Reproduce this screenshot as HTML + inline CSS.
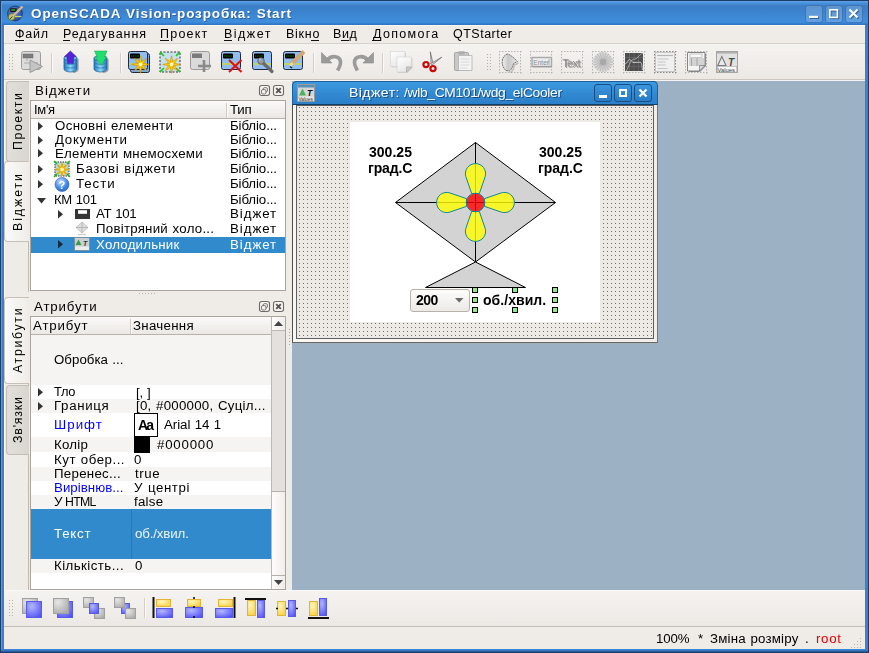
<!DOCTYPE html><html><head><meta charset="utf-8"><title>OpenSCADA</title><style>
*{margin:0;padding:0;box-sizing:border-box}
html,body{width:869px;height:653px;overflow:hidden;background:#fff;font-family:"Liberation Sans", sans-serif}
.t{position:absolute;white-space:nowrap;line-height:1;font-family:"Liberation Sans", sans-serif;word-spacing:0.6px;will-change:transform}
.a{position:absolute}
svg{position:absolute;overflow:visible}
</style></head><body>
<div class="a" style="left:0px;top:0px;width:869px;height:653px;background:#3a7fcf"></div>
<div class="a" style="left:0px;top:0px;width:869px;height:25px;background:linear-gradient(#1c3d68 0px,#1c3d68 1px,#62a2e8 1px,#4a92dc 3px,#3b7ec6 6px,#3c84d0 13px,#3f8edc 22px,#2f7cca 24px,#2a74c0 25px)"></div>
<div class="a" style="left:1px;top:25px;width:3px;height:624px;background:#3b80d0"></div>
<div class="a" style="left:865px;top:25px;width:3px;height:624px;background:#3b80d0"></div>
<div class="a" style="left:1px;top:1px;width:1px;height:651px;background:#5b9ae0"></div>
<div class="a" style="left:1px;top:649px;width:867px;height:3px;background:linear-gradient(#3d8ade,#3a80d2 1px,#2f68ac 2px,#23508a 3px)"></div>
<div class="a" style="left:0px;top:0px;width:869px;height:1px;background:#1c3d68"></div>
<div class="a" style="left:0px;top:0px;width:1px;height:653px;background:#1c3d68"></div>
<div class="a" style="left:868px;top:0px;width:1px;height:653px;background:#1c3d68"></div>
<div class="a" style="left:0px;top:652px;width:869px;height:1px;background:#1c3d68"></div>
<div class="a" style="left:4px;top:25px;width:861px;height:624px;background:#efebe7"></div>
<div class="a" style="left:4px;top:25px;width:861px;height:1px;background:#fdf6ec"></div>
<div class="a" style="left:4px;top:25px;width:1px;height:624px;background:#fdf6ec"></div>
<svg style="left:7px;top:5px;" width="16" height="16" viewBox="0 0 16 16">
<defs><radialGradient id="lg" cx="0.4" cy="0.35" r="0.8"><stop offset="0" stop-color="#5a8ae0"/><stop offset="1" stop-color="#1f3f9a"/></radialGradient></defs>
<circle cx="8" cy="8.5" r="7.4" fill="url(#lg)" stroke="#17306a" stroke-width="0.8"/>
<rect x="3.2" y="3.2" width="6.5" height="3.8" fill="#0a0a0a" stroke="#3a3a3a" stroke-width="0.5"/>
<rect x="4.2" y="4.3" width="4" height="1.4" fill="#2cc040"/>
<circle cx="4.6" cy="12" r="3.4" fill="#b5c860" stroke="#3a4020" stroke-width="0.6"/>
<path d="M3 14 L7 10" stroke="#222" stroke-width="0.8"/>
<path d="M15.5 1.5 L5.5 11.5" stroke="#d8b888" stroke-width="2.4"/>
<path d="M8 11.5 h6.5" stroke="#c8d860" stroke-width="1.3"/>
</svg>
<div class="t" style="left:30.90px;top:6.57px;font-size:13.5px;letter-spacing:0.877px;color:#fff;font-weight:bold;text-shadow:1px 1px 0 rgba(20,50,100,0.45)">OpenSCADA Vision-розробка: Start</div>
<div class="a" style="left:805px;top:5px;width:18px;height:18px;border-radius:3px;background:rgba(255,255,255,0.18);border:1px solid rgba(30,80,150,0.5)"></div>
<div class="a" style="left:825px;top:5px;width:18px;height:18px;border-radius:3px;background:rgba(255,255,255,0.18);border:1px solid rgba(30,80,150,0.5)"></div>
<div class="a" style="left:845px;top:5px;width:18px;height:18px;border-radius:3px;background:rgba(255,255,255,0.18);border:1px solid rgba(30,80,150,0.5)"></div>
<svg style="left:0px;top:0px;filter:drop-shadow(1px 1px 0 rgba(20,50,100,0.55))" width="869" height="30" viewBox="0 0 869 30"><rect x="809" y="15.8" width="9" height="2.2" fill="#fff"/><rect x="829.8" y="9.8" width="7.6" height="7.6" fill="none" stroke="#fff" stroke-width="1.6"/><path d="M849.5 9.5 L857.5 17.5 M857.5 9.5 L849.5 17.5" stroke="#fff" stroke-width="2"/></svg>
<div class="a" style="left:4px;top:43px;width:861px;height:1px;background:#d6d1cb"></div>
<div class="t" style="left:14.70px;top:28.42px;font-size:12.5px;letter-spacing:0.767px;color:#000;font-weight:normal;">Файл</div>
<div class="t" style="left:62.60px;top:28.42px;font-size:12.5px;letter-spacing:0.950px;color:#000;font-weight:normal;">Редагування</div>
<div class="t" style="left:160.20px;top:28.42px;font-size:12.5px;letter-spacing:1.220px;color:#000;font-weight:normal;">Проект</div>
<div class="t" style="left:223.60px;top:28.42px;font-size:12.5px;letter-spacing:1.480px;color:#000;font-weight:normal;">Віджет</div>
<div class="t" style="left:285.70px;top:28.42px;font-size:12.5px;letter-spacing:0.725px;color:#000;font-weight:normal;">Вікно</div>
<div class="t" style="left:333.20px;top:28.42px;font-size:12.5px;letter-spacing:0.600px;color:#000;font-weight:normal;">Вид</div>
<div class="t" style="left:372.50px;top:28.42px;font-size:12.5px;letter-spacing:1.314px;color:#000;font-weight:normal;">Допомога</div>
<div class="t" style="left:452.90px;top:28.42px;font-size:12.5px;letter-spacing:0.500px;color:#000;font-weight:normal;">QTStarter</div>
<div class="a" style="left:15px;top:40px;width:9px;height:1px;background:#111"></div>
<div class="a" style="left:63px;top:40px;width:7px;height:1px;background:#111"></div>
<div class="a" style="left:160px;top:40px;width:9px;height:1px;background:#111"></div>
<div class="a" style="left:224px;top:40px;width:8px;height:1px;background:#111"></div>
<div class="a" style="left:311px;top:40px;width:8px;height:1px;background:#111"></div>
<div class="a" style="left:341px;top:40px;width:8px;height:1px;background:#111"></div>
<div class="a" style="left:372px;top:40px;width:9px;height:1px;background:#111"></div>
<div class="a" style="left:4px;top:44px;width:861px;height:35px;background:linear-gradient(#f5f3f0,#ece9e5)"></div>
<div class="a" style="left:4px;top:79px;width:861px;height:1px;background:#cdc7c0"></div>
<div class="a" style="left:4px;top:80px;width:861px;height:1px;background:#f7f5f2"></div>
<svg style="left:9px;top:54px;" width="4" height="17" viewBox="0 0 4 17"><rect x="0" y="0" width="1" height="1" fill="#b4aea6"/><rect x="3" y="0" width="1" height="1" fill="#b4aea6"/><rect x="0" y="3" width="1" height="1" fill="#b4aea6"/><rect x="3" y="3" width="1" height="1" fill="#b4aea6"/><rect x="0" y="6" width="1" height="1" fill="#b4aea6"/><rect x="3" y="6" width="1" height="1" fill="#b4aea6"/><rect x="0" y="9" width="1" height="1" fill="#b4aea6"/><rect x="3" y="9" width="1" height="1" fill="#b4aea6"/><rect x="0" y="12" width="1" height="1" fill="#b4aea6"/><rect x="3" y="12" width="1" height="1" fill="#b4aea6"/><rect x="0" y="15" width="1" height="1" fill="#b4aea6"/><rect x="3" y="15" width="1" height="1" fill="#b4aea6"/></svg>
<div class="a" style="left:51px;top:53px;width:1px;height:20px;background:#d3cec8"></div>
<div class="a" style="left:52px;top:53px;width:1px;height:20px;background:#fbfaf8"></div>
<div class="a" style="left:120px;top:53px;width:1px;height:20px;background:#d3cec8"></div>
<div class="a" style="left:121px;top:53px;width:1px;height:20px;background:#fbfaf8"></div>
<div class="a" style="left:313px;top:53px;width:1px;height:20px;background:#d3cec8"></div>
<div class="a" style="left:314px;top:53px;width:1px;height:20px;background:#fbfaf8"></div>
<div class="a" style="left:382px;top:53px;width:1px;height:20px;background:#d3cec8"></div>
<div class="a" style="left:383px;top:53px;width:1px;height:20px;background:#fbfaf8"></div>
<svg style="left:487px;top:54px;" width="4" height="17" viewBox="0 0 4 17"><rect x="0" y="0" width="1" height="1" fill="#b4aea6"/><rect x="3" y="0" width="1" height="1" fill="#b4aea6"/><rect x="0" y="3" width="1" height="1" fill="#b4aea6"/><rect x="3" y="3" width="1" height="1" fill="#b4aea6"/><rect x="0" y="6" width="1" height="1" fill="#b4aea6"/><rect x="3" y="6" width="1" height="1" fill="#b4aea6"/><rect x="0" y="9" width="1" height="1" fill="#b4aea6"/><rect x="3" y="9" width="1" height="1" fill="#b4aea6"/><rect x="0" y="12" width="1" height="1" fill="#b4aea6"/><rect x="3" y="12" width="1" height="1" fill="#b4aea6"/><rect x="0" y="15" width="1" height="1" fill="#b4aea6"/><rect x="3" y="15" width="1" height="1" fill="#b4aea6"/></svg>
<svg style="left:21px;top:51px;" width="22" height="22" viewBox="0 0 22 22">
<rect x="0.5" y="0.5" width="19" height="18" rx="2" fill="#dcdcdc" stroke="#9d9d9d"/>
<rect x="2" y="3" width="10" height="4" fill="#7d7d7d" stroke="#666" stroke-width="0.5"/>
<path d="M6 7v3M3 12h14" stroke="#aaa" stroke-width="1"/>
<path d="M9 9 L21.5 15.5 L9 21.5 Z" fill="#c4c4c4" stroke="#9a9a9a" stroke-width="1"/>
</svg>
<svg style="left:63px;top:51px;" width="16" height="22" viewBox="0 0 16 22">
<defs><linearGradient id="dbg" x1="0" x2="1"><stop offset="0" stop-color="#1f78c0"/><stop offset="0.5" stop-color="#8fd8f8"/><stop offset="1" stop-color="#1c6fb5"/></linearGradient></defs>
<path d="M1 7 v11 a6.5 3 0 0 0 13 0 v-11" fill="url(#dbg)" stroke="#1b5f96" stroke-width="0.7"/>
<path d="M15 8 v10.5 a6.5 3 0 0 1 -5 2.9" fill="none" stroke="rgba(0,0,0,0.35)" stroke-width="1.2"/>
<ellipse cx="7.5" cy="7" rx="6.5" ry="2.6" fill="#6cc4f0" stroke="#1b5f96" stroke-width="0.7"/>
<path d="M1 10.7 a6.5 2.6 0 0 0 13 0 M1 14.4 a6.5 2.6 0 0 0 13 0" fill="none" stroke="#2a76b8" stroke-width="0.8"/>
<path d="M7.4 0 L13.2 5.6 L11 5.6 L10.2 12.6 L4.6 12.6 L3.8 5.6 L1.4 5.6 Z" fill="#5524d4" stroke="#3a12a8" stroke-width="0.5"/></svg>
<svg style="left:93px;top:51px;" width="16" height="22" viewBox="0 0 16 22">
<defs><linearGradient id="dbg2" x1="0" x2="1"><stop offset="0" stop-color="#1f78c0"/><stop offset="0.5" stop-color="#8fd8f8"/><stop offset="1" stop-color="#1c6fb5"/></linearGradient></defs>
<path d="M1 7 v11 a6.5 3 0 0 0 13 0 v-11" fill="url(#dbg2)" stroke="#1b5f96" stroke-width="0.7"/>
<path d="M15 8 v10.5 a6.5 3 0 0 1 -5 2.9" fill="none" stroke="rgba(0,0,0,0.35)" stroke-width="1.2"/>
<ellipse cx="7.5" cy="7" rx="6.5" ry="2.6" fill="#6cc4f0" stroke="#1b5f96" stroke-width="0.7"/>
<path d="M1 10.7 a6.5 2.6 0 0 0 13 0 M1 14.4 a6.5 2.6 0 0 0 13 0" fill="none" stroke="#2a76b8" stroke-width="0.8"/>
<path d="M1.5 0 L14 0 L11.4 6 L13.5 6 L7.9 14.5 L2.3 6 L4.2 6 Z" fill="#22de6c" stroke="#12a448" stroke-width="0.5"/></svg>
<svg style="left:128px;top:51px;" width="22" height="22" viewBox="0 0 22 22"><rect x="2.5" y="2.5" width="19" height="19" rx="2" fill="#7aa8e0" stroke="#1e2a40"/><rect x="0.5" y="0.5" width="19" height="18" rx="2" fill="#92bdf0" stroke="#1e2a40"/>
<rect x="2" y="2.5" width="10" height="5" rx="1" fill="#000"/>
<path d="M3 5h8" stroke="#050" stroke-width="1.4" stroke-dasharray="1.2 0.6"/>
<path d="M1 13 h18" stroke="#c8d848" stroke-width="1.5"/><path d="M12.50 15.40 L21.30 13.50 L12.50 11.60 Z" fill="#ffd400" stroke="#d08a00" stroke-width="0.6" stroke-linejoin="round"/><path d="M11.16 14.84 L18.72 19.72 L13.84 12.16 Z" fill="#ffd400" stroke="#d08a00" stroke-width="0.6" stroke-linejoin="round"/><path d="M10.60 13.50 L12.50 22.30 L14.40 13.50 Z" fill="#ffd400" stroke="#d08a00" stroke-width="0.6" stroke-linejoin="round"/><path d="M11.16 12.16 L6.28 19.72 L13.84 14.84 Z" fill="#ffd400" stroke="#d08a00" stroke-width="0.6" stroke-linejoin="round"/><path d="M12.50 11.60 L3.70 13.50 L12.50 15.40 Z" fill="#ffd400" stroke="#d08a00" stroke-width="0.6" stroke-linejoin="round"/><path d="M13.84 12.16 L6.28 7.28 L11.16 14.84 Z" fill="#ffd400" stroke="#d08a00" stroke-width="0.6" stroke-linejoin="round"/><path d="M14.40 13.50 L12.50 4.70 L10.60 13.50 Z" fill="#ffd400" stroke="#d08a00" stroke-width="0.6" stroke-linejoin="round"/><path d="M13.84 14.84 L18.72 7.28 L11.16 12.16 Z" fill="#ffd400" stroke="#d08a00" stroke-width="0.6" stroke-linejoin="round"/><circle cx="12.5" cy="13.5" r="2" fill="#fff8c0"/></svg>
<svg style="left:159px;top:51px;" width="22" height="22" viewBox="0 0 22 22"><rect x="1" y="1" width="20" height="20" fill="#bcdde8" opacity="0.8"/>
<rect x="1" y="1" width="20" height="20" fill="none" stroke="#333" stroke-dasharray="2 1.5"/>
<path d="M1 1l4 4M21 1l-4 4M1 21l4-4M21 21l-4-4" stroke="#1c1" stroke-width="1.6"/><path d="M12.50 15.40 L21.30 13.50 L12.50 11.60 Z" fill="#ffd400" stroke="#d08a00" stroke-width="0.6" stroke-linejoin="round"/><path d="M11.16 14.84 L18.72 19.72 L13.84 12.16 Z" fill="#ffd400" stroke="#d08a00" stroke-width="0.6" stroke-linejoin="round"/><path d="M10.60 13.50 L12.50 22.30 L14.40 13.50 Z" fill="#ffd400" stroke="#d08a00" stroke-width="0.6" stroke-linejoin="round"/><path d="M11.16 12.16 L6.28 19.72 L13.84 14.84 Z" fill="#ffd400" stroke="#d08a00" stroke-width="0.6" stroke-linejoin="round"/><path d="M12.50 11.60 L3.70 13.50 L12.50 15.40 Z" fill="#ffd400" stroke="#d08a00" stroke-width="0.6" stroke-linejoin="round"/><path d="M13.84 12.16 L6.28 7.28 L11.16 14.84 Z" fill="#ffd400" stroke="#d08a00" stroke-width="0.6" stroke-linejoin="round"/><path d="M14.40 13.50 L12.50 4.70 L10.60 13.50 Z" fill="#ffd400" stroke="#d08a00" stroke-width="0.6" stroke-linejoin="round"/><path d="M13.84 14.84 L18.72 7.28 L11.16 12.16 Z" fill="#ffd400" stroke="#d08a00" stroke-width="0.6" stroke-linejoin="round"/><circle cx="12.5" cy="13.5" r="2" fill="#fff8c0"/></svg>
<svg style="left:190px;top:51px;" width="22" height="22" viewBox="0 0 22 22"><rect x="0.5" y="0.5" width="19" height="18" rx="2" fill="#dadada" stroke="#9a9a9a"/>
<rect x="2" y="2.5" width="10" height="4.5" fill="#7a7a7a"/>
<path d="M14 9 v12 M8 15 h13" stroke="#8a8a8a" stroke-width="2.6"/></svg>
<svg style="left:221px;top:51px;" width="22" height="22" viewBox="0 0 22 22"><rect x="0.5" y="0.5" width="19" height="18" rx="2" fill="#92bdf0" stroke="#1e2a40"/>
<rect x="2" y="2.5" width="10" height="5" rx="1" fill="#000"/>
<path d="M3 5h8" stroke="#050" stroke-width="1.4" stroke-dasharray="1.2 0.6"/>
<path d="M1 13 h18" stroke="#c8d848" stroke-width="1.5"/><path d="M8 9 L20.5 21 M20.5 9 L8 21" stroke="#e01010" stroke-width="2"/></svg>
<svg style="left:252px;top:51px;" width="22" height="22" viewBox="0 0 22 22"><rect x="0.5" y="0.5" width="19" height="18" rx="2" fill="#92bdf0" stroke="#1e2a40"/>
<rect x="2" y="2.5" width="10" height="5" rx="1" fill="#000"/>
<path d="M3 5h8" stroke="#050" stroke-width="1.4" stroke-dasharray="1.2 0.6"/>
<path d="M1 13 h18" stroke="#c8d848" stroke-width="1.5"/><path d="M9 10 L20 20.5" stroke="#6a6a6a" stroke-width="3.2" stroke-linecap="round"/><circle cx="9" cy="10" r="3.3" fill="#9a9a9a" stroke="#555" stroke-width="0.8"/><circle cx="8" cy="8.5" r="1.3" fill="#92bdf0"/></svg>
<svg style="left:283px;top:51px;" width="22" height="22" viewBox="0 0 22 22"><rect x="0.5" y="0.5" width="19" height="18" rx="2" fill="#92bdf0" stroke="#1e2a40"/>
<rect x="2" y="2.5" width="10" height="5" rx="1" fill="#000"/>
<path d="M3 5h8" stroke="#050" stroke-width="1.4" stroke-dasharray="1.2 0.6"/>
<path d="M1 13 h18" stroke="#c8d848" stroke-width="1.5"/><path d="M21 0.5 L8.5 13" stroke="#d0a878" stroke-width="4" stroke-linecap="butt"/><path d="M10 12 L7 15" stroke="#e8d890" stroke-width="3"/><path d="M7 15.5 L9 17" stroke="#222" stroke-width="1.5"/></svg>
<svg style="left:321px;top:51px;" width="22" height="22" viewBox="0 0 22 22"><path d="M6.5 9 C10 4 19.5 4.5 19.5 11.5 C19.5 14.5 18 17 16.5 19.5" fill="none" stroke="#9b9b9b" stroke-width="3.6"/>
<path d="M0.5 1.5 L0.5 12 L11 12 Z" fill="#9b9b9b" stroke="#8a8a8a" stroke-width="0.6"/></svg>
<svg style="left:352px;top:51px;" width="22" height="22" viewBox="0 0 22 22"><g transform="translate(22,0) scale(-1,1)"><path d="M6.5 9 C10 4 19.5 4.5 19.5 11.5 C19.5 14.5 18 17 16.5 19.5" fill="none" stroke="#9b9b9b" stroke-width="3.6"/>
<path d="M0.5 1.5 L0.5 12 L11 12 Z" fill="#9b9b9b" stroke="#8a8a8a" stroke-width="0.6"/></g></svg>
<svg style="left:390px;top:51px;" width="22" height="22" viewBox="0 0 22 22"><defs><linearGradient id="cpg" x1="0" y1="0" x2="0.6" y2="1"><stop offset="0" stop-color="#ffffff"/><stop offset="1" stop-color="#e6e6e6"/></linearGradient></defs><path d="M1.5 1.5 h14.5 v10 l-5 5 h-9.5 z" fill="rgba(0,0,0,0.12)"/>
<path d="M0.5 0.5 h14.5 v10 l-5 5 h-9.5 z" fill="url(#cpg)" stroke="#d0d0d0" stroke-width="0.6"/>
<path d="M15.0 10.5 h-5 v5 z" fill="#cfcfcf" stroke="#9a9a9a" stroke-width="0.6"/><path d="M8 7 h14.5 v10 l-5 5 h-9.5 z" fill="rgba(0,0,0,0.12)"/>
<path d="M7 6 h14.5 v10 l-5 5 h-9.5 z" fill="url(#cpg)" stroke="#d0d0d0" stroke-width="0.6"/>
<path d="M21.5 16 h-5 v5 z" fill="#cfcfcf" stroke="#9a9a9a" stroke-width="0.6"/></svg>
<svg style="left:422px;top:51px;" width="22" height="22" viewBox="0 0 22 22"><path d="M8.3 0.8 L9.2 12.8 L11 12.5 Z" fill="#d8d8d8" stroke="#6a6a6a" stroke-width="0.7" stroke-linejoin="round"/>
<path d="M19.8 6.2 L8.6 12.6 L10.2 14 Z" fill="#d0d0d0" stroke="#6a6a6a" stroke-width="0.7" stroke-linejoin="round"/>
<circle cx="4" cy="13.6" r="2.6" fill="none" stroke="#c80a0a" stroke-width="2.2"/>
<circle cx="11" cy="17.6" r="2.6" fill="none" stroke="#c80a0a" stroke-width="2.2"/></svg>
<svg style="left:453px;top:51px;" width="22" height="22" viewBox="0 0 22 22"><rect x="1.5" y="1.5" width="14" height="18" rx="1" fill="#c8c8c8" stroke="#999" stroke-width="0.8"/>
<rect x="5.5" y="0.3" width="6" height="3" fill="#aaa"/>
<path d="M5.5 4.5 h13.5 v15 h-13.5 z" fill="#f4f4f4" stroke="#b0b0b0" stroke-width="0.8"/>
<path d="M7.5 8h9M7.5 11h9M7.5 14h9M7.5 17h7" stroke="#d0d0d0" stroke-width="0.8"/></svg>
<svg style="left:499px;top:51px;" width="22" height="22" viewBox="0 0 22 22"><rect x="0" y="0" width="1.5" height="1" fill="#b5b5b5"/><rect x="0" y="21" width="1.5" height="1" fill="#b5b5b5"/><rect x="0" y="0" width="1" height="1.5" fill="#b5b5b5"/><rect x="21" y="0" width="1" height="1.5" fill="#b5b5b5"/><rect x="3" y="0" width="1.5" height="1" fill="#b5b5b5"/><rect x="3" y="21" width="1.5" height="1" fill="#b5b5b5"/><rect x="0" y="3" width="1" height="1.5" fill="#b5b5b5"/><rect x="21" y="3" width="1" height="1.5" fill="#b5b5b5"/><rect x="6" y="0" width="1.5" height="1" fill="#b5b5b5"/><rect x="6" y="21" width="1.5" height="1" fill="#b5b5b5"/><rect x="0" y="6" width="1" height="1.5" fill="#b5b5b5"/><rect x="21" y="6" width="1" height="1.5" fill="#b5b5b5"/><rect x="9" y="0" width="1.5" height="1" fill="#b5b5b5"/><rect x="9" y="21" width="1.5" height="1" fill="#b5b5b5"/><rect x="0" y="9" width="1" height="1.5" fill="#b5b5b5"/><rect x="21" y="9" width="1" height="1.5" fill="#b5b5b5"/><rect x="12" y="0" width="1.5" height="1" fill="#b5b5b5"/><rect x="12" y="21" width="1.5" height="1" fill="#b5b5b5"/><rect x="0" y="12" width="1" height="1.5" fill="#b5b5b5"/><rect x="21" y="12" width="1" height="1.5" fill="#b5b5b5"/><rect x="15" y="0" width="1.5" height="1" fill="#b5b5b5"/><rect x="15" y="21" width="1.5" height="1" fill="#b5b5b5"/><rect x="0" y="15" width="1" height="1.5" fill="#b5b5b5"/><rect x="21" y="15" width="1" height="1.5" fill="#b5b5b5"/><rect x="18" y="0" width="1.5" height="1" fill="#b5b5b5"/><rect x="18" y="21" width="1.5" height="1" fill="#b5b5b5"/><rect x="0" y="18" width="1" height="1.5" fill="#b5b5b5"/><rect x="21" y="18" width="1" height="1.5" fill="#b5b5b5"/><rect x="21" y="0" width="1.5" height="1" fill="#b5b5b5"/><rect x="21" y="21" width="1.5" height="1" fill="#b5b5b5"/><rect x="0" y="21" width="1" height="1.5" fill="#b5b5b5"/><rect x="21" y="21" width="1" height="1.5" fill="#b5b5b5"/><defs><linearGradient id="efg" x1="0" x2="1"><stop offset="0" stop-color="#f0f0f0"/><stop offset="0.4" stop-color="#c8c8c8"/><stop offset="1" stop-color="#e8e8e8"/></linearGradient></defs><path d="M7 19.5 C1.5 15 2 5 8.5 3 C12 4 15 7 18.5 10.5 L14.5 12.5 C14 15 13 18 10.5 20 Z" fill="url(#efg)" stroke="#666" stroke-width="0.9" stroke-dasharray="2 0.6"/><path d="M18.5 11 L14.5 13 C14 16 13 19 10.5 20.5" fill="none" stroke="rgba(0,0,0,0.2)" stroke-width="1.5" transform="translate(1 1)"/></svg>
<svg style="left:530px;top:51px;" width="22" height="22" viewBox="0 0 22 22"><rect x="0" y="0" width="1.5" height="1" fill="#b5b5b5"/><rect x="0" y="21" width="1.5" height="1" fill="#b5b5b5"/><rect x="0" y="0" width="1" height="1.5" fill="#b5b5b5"/><rect x="21" y="0" width="1" height="1.5" fill="#b5b5b5"/><rect x="3" y="0" width="1.5" height="1" fill="#b5b5b5"/><rect x="3" y="21" width="1.5" height="1" fill="#b5b5b5"/><rect x="0" y="3" width="1" height="1.5" fill="#b5b5b5"/><rect x="21" y="3" width="1" height="1.5" fill="#b5b5b5"/><rect x="6" y="0" width="1.5" height="1" fill="#b5b5b5"/><rect x="6" y="21" width="1.5" height="1" fill="#b5b5b5"/><rect x="0" y="6" width="1" height="1.5" fill="#b5b5b5"/><rect x="21" y="6" width="1" height="1.5" fill="#b5b5b5"/><rect x="9" y="0" width="1.5" height="1" fill="#b5b5b5"/><rect x="9" y="21" width="1.5" height="1" fill="#b5b5b5"/><rect x="0" y="9" width="1" height="1.5" fill="#b5b5b5"/><rect x="21" y="9" width="1" height="1.5" fill="#b5b5b5"/><rect x="12" y="0" width="1.5" height="1" fill="#b5b5b5"/><rect x="12" y="21" width="1.5" height="1" fill="#b5b5b5"/><rect x="0" y="12" width="1" height="1.5" fill="#b5b5b5"/><rect x="21" y="12" width="1" height="1.5" fill="#b5b5b5"/><rect x="15" y="0" width="1.5" height="1" fill="#b5b5b5"/><rect x="15" y="21" width="1.5" height="1" fill="#b5b5b5"/><rect x="0" y="15" width="1" height="1.5" fill="#b5b5b5"/><rect x="21" y="15" width="1" height="1.5" fill="#b5b5b5"/><rect x="18" y="0" width="1.5" height="1" fill="#b5b5b5"/><rect x="18" y="21" width="1.5" height="1" fill="#b5b5b5"/><rect x="0" y="18" width="1" height="1.5" fill="#b5b5b5"/><rect x="21" y="18" width="1" height="1.5" fill="#b5b5b5"/><rect x="21" y="0" width="1.5" height="1" fill="#b5b5b5"/><rect x="21" y="21" width="1.5" height="1" fill="#b5b5b5"/><rect x="0" y="21" width="1" height="1.5" fill="#b5b5b5"/><rect x="21" y="21" width="1" height="1.5" fill="#b5b5b5"/><rect x="2" y="6.5" width="19.5" height="9" fill="#ececec" stroke="#a8a8a8" stroke-width="1.4"/><rect x="2.5" y="15.5" width="19" height="1.2" fill="rgba(0,0,0,0.15)"/><text x="3.3" y="13.6" font-size="6.6" fill="#8a8a8a" font-family="Liberation Sans">Enter</text><path d="M19 8v6" stroke="#999" stroke-width="0.8"/></svg>
<svg style="left:561px;top:51px;" width="22" height="22" viewBox="0 0 22 22"><rect x="0" y="0" width="1.5" height="1" fill="#b5b5b5"/><rect x="0" y="21" width="1.5" height="1" fill="#b5b5b5"/><rect x="0" y="0" width="1" height="1.5" fill="#b5b5b5"/><rect x="21" y="0" width="1" height="1.5" fill="#b5b5b5"/><rect x="3" y="0" width="1.5" height="1" fill="#b5b5b5"/><rect x="3" y="21" width="1.5" height="1" fill="#b5b5b5"/><rect x="0" y="3" width="1" height="1.5" fill="#b5b5b5"/><rect x="21" y="3" width="1" height="1.5" fill="#b5b5b5"/><rect x="6" y="0" width="1.5" height="1" fill="#b5b5b5"/><rect x="6" y="21" width="1.5" height="1" fill="#b5b5b5"/><rect x="0" y="6" width="1" height="1.5" fill="#b5b5b5"/><rect x="21" y="6" width="1" height="1.5" fill="#b5b5b5"/><rect x="9" y="0" width="1.5" height="1" fill="#b5b5b5"/><rect x="9" y="21" width="1.5" height="1" fill="#b5b5b5"/><rect x="0" y="9" width="1" height="1.5" fill="#b5b5b5"/><rect x="21" y="9" width="1" height="1.5" fill="#b5b5b5"/><rect x="12" y="0" width="1.5" height="1" fill="#b5b5b5"/><rect x="12" y="21" width="1.5" height="1" fill="#b5b5b5"/><rect x="0" y="12" width="1" height="1.5" fill="#b5b5b5"/><rect x="21" y="12" width="1" height="1.5" fill="#b5b5b5"/><rect x="15" y="0" width="1.5" height="1" fill="#b5b5b5"/><rect x="15" y="21" width="1.5" height="1" fill="#b5b5b5"/><rect x="0" y="15" width="1" height="1.5" fill="#b5b5b5"/><rect x="21" y="15" width="1" height="1.5" fill="#b5b5b5"/><rect x="18" y="0" width="1.5" height="1" fill="#b5b5b5"/><rect x="18" y="21" width="1.5" height="1" fill="#b5b5b5"/><rect x="0" y="18" width="1" height="1.5" fill="#b5b5b5"/><rect x="21" y="18" width="1" height="1.5" fill="#b5b5b5"/><rect x="21" y="0" width="1.5" height="1" fill="#b5b5b5"/><rect x="21" y="21" width="1.5" height="1" fill="#b5b5b5"/><rect x="0" y="21" width="1" height="1.5" fill="#b5b5b5"/><rect x="21" y="21" width="1" height="1.5" fill="#b5b5b5"/><text x="1.2" y="15.5" font-size="11" fill="#8e8e8e" font-family="Liberation Sans" letter-spacing="-0.6" style="filter:drop-shadow(1px 1.2px 0.6px rgba(0,0,0,0.35))">Text</text></svg>
<svg style="left:592px;top:51px;" width="22" height="22" viewBox="0 0 22 22"><rect x="0" y="0" width="1.5" height="1" fill="#b5b5b5"/><rect x="0" y="21" width="1.5" height="1" fill="#b5b5b5"/><rect x="0" y="0" width="1" height="1.5" fill="#b5b5b5"/><rect x="21" y="0" width="1" height="1.5" fill="#b5b5b5"/><rect x="3" y="0" width="1.5" height="1" fill="#b5b5b5"/><rect x="3" y="21" width="1.5" height="1" fill="#b5b5b5"/><rect x="0" y="3" width="1" height="1.5" fill="#b5b5b5"/><rect x="21" y="3" width="1" height="1.5" fill="#b5b5b5"/><rect x="6" y="0" width="1.5" height="1" fill="#b5b5b5"/><rect x="6" y="21" width="1.5" height="1" fill="#b5b5b5"/><rect x="0" y="6" width="1" height="1.5" fill="#b5b5b5"/><rect x="21" y="6" width="1" height="1.5" fill="#b5b5b5"/><rect x="9" y="0" width="1.5" height="1" fill="#b5b5b5"/><rect x="9" y="21" width="1.5" height="1" fill="#b5b5b5"/><rect x="0" y="9" width="1" height="1.5" fill="#b5b5b5"/><rect x="21" y="9" width="1" height="1.5" fill="#b5b5b5"/><rect x="12" y="0" width="1.5" height="1" fill="#b5b5b5"/><rect x="12" y="21" width="1.5" height="1" fill="#b5b5b5"/><rect x="0" y="12" width="1" height="1.5" fill="#b5b5b5"/><rect x="21" y="12" width="1" height="1.5" fill="#b5b5b5"/><rect x="15" y="0" width="1.5" height="1" fill="#b5b5b5"/><rect x="15" y="21" width="1.5" height="1" fill="#b5b5b5"/><rect x="0" y="15" width="1" height="1.5" fill="#b5b5b5"/><rect x="21" y="15" width="1" height="1.5" fill="#b5b5b5"/><rect x="18" y="0" width="1.5" height="1" fill="#b5b5b5"/><rect x="18" y="21" width="1.5" height="1" fill="#b5b5b5"/><rect x="0" y="18" width="1" height="1.5" fill="#b5b5b5"/><rect x="21" y="18" width="1" height="1.5" fill="#b5b5b5"/><rect x="21" y="0" width="1.5" height="1" fill="#b5b5b5"/><rect x="21" y="21" width="1.5" height="1" fill="#b5b5b5"/><rect x="0" y="21" width="1" height="1.5" fill="#b5b5b5"/><rect x="21" y="21" width="1" height="1.5" fill="#b5b5b5"/><circle cx="11" cy="11" r="10" fill="#dcdcdc"/><path d="M11 11 l10.00 0.00" stroke="#bdbdbd" stroke-width="1.3"/><path d="M11 11 l9.51 3.09" stroke="#bdbdbd" stroke-width="1.3"/><path d="M11 11 l8.09 5.88" stroke="#bdbdbd" stroke-width="1.3"/><path d="M11 11 l5.88 8.09" stroke="#bdbdbd" stroke-width="1.3"/><path d="M11 11 l3.09 9.51" stroke="#bdbdbd" stroke-width="1.3"/><path d="M11 11 l0.00 10.00" stroke="#bdbdbd" stroke-width="1.3"/><path d="M11 11 l-3.09 9.51" stroke="#bdbdbd" stroke-width="1.3"/><path d="M11 11 l-5.88 8.09" stroke="#bdbdbd" stroke-width="1.3"/><path d="M11 11 l-8.09 5.88" stroke="#bdbdbd" stroke-width="1.3"/><path d="M11 11 l-9.51 3.09" stroke="#bdbdbd" stroke-width="1.3"/><path d="M11 11 l-10.00 0.00" stroke="#bdbdbd" stroke-width="1.3"/><path d="M11 11 l-9.51 -3.09" stroke="#bdbdbd" stroke-width="1.3"/><path d="M11 11 l-8.09 -5.88" stroke="#bdbdbd" stroke-width="1.3"/><path d="M11 11 l-5.88 -8.09" stroke="#bdbdbd" stroke-width="1.3"/><path d="M11 11 l-3.09 -9.51" stroke="#bdbdbd" stroke-width="1.3"/><path d="M11 11 l-0.00 -10.00" stroke="#bdbdbd" stroke-width="1.3"/><path d="M11 11 l3.09 -9.51" stroke="#bdbdbd" stroke-width="1.3"/><path d="M11 11 l5.88 -8.09" stroke="#bdbdbd" stroke-width="1.3"/><path d="M11 11 l8.09 -5.88" stroke="#bdbdbd" stroke-width="1.3"/><path d="M11 11 l9.51 -3.09" stroke="#bdbdbd" stroke-width="1.3"/><circle cx="11" cy="11" r="3.2" fill="#a8a8a8"/></svg>
<svg style="left:623px;top:51px;" width="22" height="22" viewBox="0 0 22 22"><rect x="0" y="0" width="1.5" height="1" fill="#b5b5b5"/><rect x="0" y="21" width="1.5" height="1" fill="#b5b5b5"/><rect x="0" y="0" width="1" height="1.5" fill="#b5b5b5"/><rect x="21" y="0" width="1" height="1.5" fill="#b5b5b5"/><rect x="3" y="0" width="1.5" height="1" fill="#b5b5b5"/><rect x="3" y="21" width="1.5" height="1" fill="#b5b5b5"/><rect x="0" y="3" width="1" height="1.5" fill="#b5b5b5"/><rect x="21" y="3" width="1" height="1.5" fill="#b5b5b5"/><rect x="6" y="0" width="1.5" height="1" fill="#b5b5b5"/><rect x="6" y="21" width="1.5" height="1" fill="#b5b5b5"/><rect x="0" y="6" width="1" height="1.5" fill="#b5b5b5"/><rect x="21" y="6" width="1" height="1.5" fill="#b5b5b5"/><rect x="9" y="0" width="1.5" height="1" fill="#b5b5b5"/><rect x="9" y="21" width="1.5" height="1" fill="#b5b5b5"/><rect x="0" y="9" width="1" height="1.5" fill="#b5b5b5"/><rect x="21" y="9" width="1" height="1.5" fill="#b5b5b5"/><rect x="12" y="0" width="1.5" height="1" fill="#b5b5b5"/><rect x="12" y="21" width="1.5" height="1" fill="#b5b5b5"/><rect x="0" y="12" width="1" height="1.5" fill="#b5b5b5"/><rect x="21" y="12" width="1" height="1.5" fill="#b5b5b5"/><rect x="15" y="0" width="1.5" height="1" fill="#b5b5b5"/><rect x="15" y="21" width="1.5" height="1" fill="#b5b5b5"/><rect x="0" y="15" width="1" height="1.5" fill="#b5b5b5"/><rect x="21" y="15" width="1" height="1.5" fill="#b5b5b5"/><rect x="18" y="0" width="1.5" height="1" fill="#b5b5b5"/><rect x="18" y="21" width="1.5" height="1" fill="#b5b5b5"/><rect x="0" y="18" width="1" height="1.5" fill="#b5b5b5"/><rect x="21" y="18" width="1" height="1.5" fill="#b5b5b5"/><rect x="21" y="0" width="1.5" height="1" fill="#b5b5b5"/><rect x="21" y="21" width="1.5" height="1" fill="#b5b5b5"/><rect x="0" y="21" width="1" height="1.5" fill="#b5b5b5"/><rect x="21" y="21" width="1" height="1.5" fill="#b5b5b5"/><rect x="2" y="2" width="18" height="18" fill="#4e4e4e"/><path d="M2 6.5h18M2 11h18M2 15.5h18M6.5 2v18M11 2v18M15.5 2v18" stroke="#777" stroke-width="0.5"/><path d="M2 13 C4 13 5 8.5 6.5 8.5 C8 8.5 8.5 11.5 11 11.5 C14 11.5 16 11 17.5 11.5 C19 12 19 16 19.5 19" fill="none" stroke="#d0d0d0" stroke-width="0.9"/><path d="M3 20 C6 16 7 10 9 9 C11 8 13 8.5 15 6 C17 4 18 3 20 2" fill="none" stroke="#b8b8b8" stroke-width="0.8"/></svg>
<svg style="left:654px;top:51px;" width="22" height="22" viewBox="0 0 22 22"><rect x="0" y="0" width="1.5" height="1" fill="#8a8a8a"/><rect x="0" y="21" width="1.5" height="1" fill="#8a8a8a"/><rect x="0" y="0" width="1" height="1.5" fill="#8a8a8a"/><rect x="21" y="0" width="1" height="1.5" fill="#8a8a8a"/><rect x="3" y="0" width="1.5" height="1" fill="#8a8a8a"/><rect x="3" y="21" width="1.5" height="1" fill="#8a8a8a"/><rect x="0" y="3" width="1" height="1.5" fill="#8a8a8a"/><rect x="21" y="3" width="1" height="1.5" fill="#8a8a8a"/><rect x="6" y="0" width="1.5" height="1" fill="#8a8a8a"/><rect x="6" y="21" width="1.5" height="1" fill="#8a8a8a"/><rect x="0" y="6" width="1" height="1.5" fill="#8a8a8a"/><rect x="21" y="6" width="1" height="1.5" fill="#8a8a8a"/><rect x="9" y="0" width="1.5" height="1" fill="#8a8a8a"/><rect x="9" y="21" width="1.5" height="1" fill="#8a8a8a"/><rect x="0" y="9" width="1" height="1.5" fill="#8a8a8a"/><rect x="21" y="9" width="1" height="1.5" fill="#8a8a8a"/><rect x="12" y="0" width="1.5" height="1" fill="#8a8a8a"/><rect x="12" y="21" width="1.5" height="1" fill="#8a8a8a"/><rect x="0" y="12" width="1" height="1.5" fill="#8a8a8a"/><rect x="21" y="12" width="1" height="1.5" fill="#8a8a8a"/><rect x="15" y="0" width="1.5" height="1" fill="#8a8a8a"/><rect x="15" y="21" width="1.5" height="1" fill="#8a8a8a"/><rect x="0" y="15" width="1" height="1.5" fill="#8a8a8a"/><rect x="21" y="15" width="1" height="1.5" fill="#8a8a8a"/><rect x="18" y="0" width="1.5" height="1" fill="#8a8a8a"/><rect x="18" y="21" width="1.5" height="1" fill="#8a8a8a"/><rect x="0" y="18" width="1" height="1.5" fill="#8a8a8a"/><rect x="21" y="18" width="1" height="1.5" fill="#8a8a8a"/><rect x="21" y="0" width="1.5" height="1" fill="#8a8a8a"/><rect x="21" y="21" width="1.5" height="1" fill="#8a8a8a"/><rect x="0" y="21" width="1" height="1.5" fill="#8a8a8a"/><rect x="21" y="21" width="1" height="1.5" fill="#8a8a8a"/><rect x="1.5" y="1.5" width="19" height="19" fill="#f0f0f0" stroke="#999" stroke-width="0.8" stroke-dasharray="1.2 0.8"/><path d="M3 4.5h16" stroke="#b5b5b5" stroke-width="1.2"/><path d="M3.5 8h11M3.5 11h8M3.5 14h8M3.5 17.5h10" stroke="#c4c4c4" stroke-width="1.2"/></svg>
<svg style="left:685px;top:51px;" width="22" height="22" viewBox="0 0 22 22"><rect x="0" y="0" width="1.5" height="1" fill="#b5b5b5"/><rect x="0" y="21" width="1.5" height="1" fill="#b5b5b5"/><rect x="0" y="0" width="1" height="1.5" fill="#b5b5b5"/><rect x="21" y="0" width="1" height="1.5" fill="#b5b5b5"/><rect x="3" y="0" width="1.5" height="1" fill="#b5b5b5"/><rect x="3" y="21" width="1.5" height="1" fill="#b5b5b5"/><rect x="0" y="3" width="1" height="1.5" fill="#b5b5b5"/><rect x="21" y="3" width="1" height="1.5" fill="#b5b5b5"/><rect x="6" y="0" width="1.5" height="1" fill="#b5b5b5"/><rect x="6" y="21" width="1.5" height="1" fill="#b5b5b5"/><rect x="0" y="6" width="1" height="1.5" fill="#b5b5b5"/><rect x="21" y="6" width="1" height="1.5" fill="#b5b5b5"/><rect x="9" y="0" width="1.5" height="1" fill="#b5b5b5"/><rect x="9" y="21" width="1.5" height="1" fill="#b5b5b5"/><rect x="0" y="9" width="1" height="1.5" fill="#b5b5b5"/><rect x="21" y="9" width="1" height="1.5" fill="#b5b5b5"/><rect x="12" y="0" width="1.5" height="1" fill="#b5b5b5"/><rect x="12" y="21" width="1.5" height="1" fill="#b5b5b5"/><rect x="0" y="12" width="1" height="1.5" fill="#b5b5b5"/><rect x="21" y="12" width="1" height="1.5" fill="#b5b5b5"/><rect x="15" y="0" width="1.5" height="1" fill="#b5b5b5"/><rect x="15" y="21" width="1.5" height="1" fill="#b5b5b5"/><rect x="0" y="15" width="1" height="1.5" fill="#b5b5b5"/><rect x="21" y="15" width="1" height="1.5" fill="#b5b5b5"/><rect x="18" y="0" width="1.5" height="1" fill="#b5b5b5"/><rect x="18" y="21" width="1.5" height="1" fill="#b5b5b5"/><rect x="0" y="18" width="1" height="1.5" fill="#b5b5b5"/><rect x="21" y="18" width="1" height="1.5" fill="#b5b5b5"/><rect x="21" y="0" width="1.5" height="1" fill="#b5b5b5"/><rect x="21" y="21" width="1.5" height="1" fill="#b5b5b5"/><rect x="0" y="21" width="1" height="1.5" fill="#b5b5b5"/><rect x="21" y="21" width="1" height="1.5" fill="#b5b5b5"/><path d="M2.5 1.5 h17.5 v13 l-5.5 5.5 h-12 z" fill="#f4f4f4" stroke="#777" stroke-width="0.9"/><path d="M20.5 3 v12 l-5.5 5.5 h-11" fill="none" stroke="rgba(0,0,0,0.25)" stroke-width="1.2"/><rect x="5" y="3" width="12" height="3.5" fill="#f8f8f8" stroke="#999" stroke-width="0.5"/><path d="M4 8h15M4 10h15M4 12h15M4 14h15M6.5 7v8M12 7v8" stroke="#888" stroke-width="0.6"/><path d="M14.5 20 v-5.5 h5.5 z" fill="#d8d8d8" stroke="#777" stroke-width="0.7"/></svg>
<svg style="left:716px;top:51px;" width="22" height="22" viewBox="0 0 22 22"><rect x="0.5" y="0.5" width="21" height="21" fill="#e2e2e2" stroke="#a5a5a5"/><rect x="1" y="1" width="20" height="1.6" fill="#b0b0b0"/><path d="M5.8 5.5 L10 14.5 L1.8 14.5 Z" fill="#eaeaea" stroke="#7a7a7a" stroke-width="1.1"/><text x="12" y="14.5" font-size="10" font-weight="bold" font-style="italic" fill="#4a4a4a" font-family="Liberation Sans">T</text><rect x="1.2" y="15.5" width="19.6" height="5.6" fill="#fafafa" stroke="#999" stroke-width="0.5"/><text x="1.6" y="20.6" font-size="5.8" fill="#444" font-family="Liberation Sans">Values</text></svg>
<div class="a" style="left:28px;top:241px;width:1px;height:51px;background:#bfb9b1"></div>
<div class="a" style="left:6px;top:81px;width:23px;height:81px;background:linear-gradient(90deg,#e2dfdb,#d9d6d2);border:1px solid #c3bdb5;border-right:none;border-radius:4px 0 0 4px"></div>
<div class="t" style="left:12.39px;top:150.30px;font-size:12.3px;letter-spacing:1.600px;transform-origin:0 0;transform:rotate(-90deg) translateX(0)">Проекти</div>
<div class="a" style="left:4px;top:161px;width:25px;height:81px;background:linear-gradient(90deg,#fbfaf8,#efece8);border:1px solid #c6c0b8;border-right:none;border-radius:4px 0 0 4px"></div>
<div class="t" style="left:12.39px;top:231.00px;font-size:12.3px;letter-spacing:1.950px;transform-origin:0 0;transform:rotate(-90deg) translateX(0)">Віджети</div>
<div class="a" style="left:28px;top:384px;width:1px;height:206px;background:#bfb9b1"></div>
<div class="a" style="left:4px;top:297px;width:25px;height:87px;background:linear-gradient(90deg,#fbfaf8,#efece8);border:1px solid #c6c0b8;border-right:none;border-radius:4px 0 0 4px"></div>
<div class="t" style="left:12.39px;top:373.30px;font-size:12.3px;letter-spacing:1.686px;transform-origin:0 0;transform:rotate(-90deg) translateX(0)">Атрибути</div>
<div class="a" style="left:6px;top:385px;width:23px;height:70px;background:linear-gradient(90deg,#e2dfdb,#d9d6d2);border:1px solid #c3bdb5;border-right:none;border-radius:4px 0 0 4px"></div>
<div class="t" style="left:12.39px;top:443.20px;font-size:12.3px;letter-spacing:0.850px;transform-origin:0 0;transform:rotate(-90deg) translateX(0)">Зв'язки</div>
<div class="t" style="left:34.50px;top:85.19px;font-size:12.3px;letter-spacing:0.969px;color:#000;font-weight:normal;transform:scaleX(1.080);transform-origin:0 0;">Віджети</div>
<svg style="left:259px;top:85px;" width="11" height="11" viewBox="0 0 11 11"><rect x="0.5" y="0.5" width="10" height="10" rx="2.2" fill="#f6f4f1" stroke="#6e6a66" stroke-width="1.1"/><rect x="4.2" y="2.7" width="4.2" height="4.2" rx="1.2" fill="none" stroke="#666" stroke-width="0.9"/><rect x="2.5" y="4.6" width="4.4" height="4.4" rx="1.2" fill="#f6f4f1" stroke="#666" stroke-width="0.9"/></svg>
<svg style="left:273px;top:85px;" width="11" height="11" viewBox="0 0 11 11"><rect x="0.5" y="0.5" width="10" height="10" rx="2.2" fill="#f6f4f1" stroke="#6e6a66" stroke-width="1.1"/><path d="M3.2 3.2 L7.8 7.8 M7.8 3.2 L3.2 7.8" stroke="#555" stroke-width="1.9"/></svg>
<div class="t" style="left:34.40px;top:301.09px;font-size:12.3px;letter-spacing:0.765px;color:#000;font-weight:normal;transform:scaleX(1.080);transform-origin:0 0;">Атрибути</div>
<svg style="left:259px;top:301px;" width="11" height="11" viewBox="0 0 11 11"><rect x="0.5" y="0.5" width="10" height="10" rx="2.2" fill="#f6f4f1" stroke="#6e6a66" stroke-width="1.1"/><rect x="4.2" y="2.7" width="4.2" height="4.2" rx="1.2" fill="none" stroke="#666" stroke-width="0.9"/><rect x="2.5" y="4.6" width="4.4" height="4.4" rx="1.2" fill="#f6f4f1" stroke="#666" stroke-width="0.9"/></svg>
<svg style="left:273px;top:301px;" width="11" height="11" viewBox="0 0 11 11"><rect x="0.5" y="0.5" width="10" height="10" rx="2.2" fill="#f6f4f1" stroke="#6e6a66" stroke-width="1.1"/><path d="M3.2 3.2 L7.8 7.8 M7.8 3.2 L3.2 7.8" stroke="#555" stroke-width="1.9"/></svg>
<div class="a" style="left:30px;top:100px;width:256px;height:191px;background:#fff;border:1px solid #aaa49c"></div>
<div class="a" style="left:31px;top:101px;width:254px;height:17px;background:linear-gradient(#fbfaf9,#ebe8e4)"></div>
<div class="a" style="left:31px;top:118px;width:254px;height:1px;background:#b8b2aa"></div>
<div class="a" style="left:226px;top:103px;width:1px;height:15px;background:#cfcac4"></div>
<div class="a" style="left:227px;top:103px;width:1px;height:15px;background:#fbfaf8"></div>
<div class="t" style="left:33.60px;top:104.09px;font-size:12.3px;letter-spacing:-0.300px;color:#000;font-weight:normal;transform:scaleX(1.055);transform-origin:0 0;">Ім'я</div>
<div class="t" style="left:229.70px;top:104.09px;font-size:12.3px;letter-spacing:-0.157px;color:#000;font-weight:normal;transform:scaleX(1.080);transform-origin:0 0;">Тип</div>
<div class="a" style="left:31px;top:237px;width:254px;height:16px;background:#308acb"></div>
<svg style="left:38px;top:121.5px;" width="6" height="9" viewBox="0 0 6 9"><path d="M0 0 L5 4.25 L0 8.5 Z" fill="#333"/></svg>
<div class="t" style="left:54.60px;top:119.99px;font-size:12.3px;letter-spacing:0.317px;color:#000;font-weight:normal;transform:scaleX(1.080);transform-origin:0 0;">Основні елементи</div>
<div class="t" style="left:230.40px;top:119.99px;font-size:12.3px;letter-spacing:-0.098px;color:#000;font-weight:normal;transform:scaleX(1.080);transform-origin:0 0;">Бібліо...</div>
<svg style="left:38px;top:135.5px;" width="6" height="9" viewBox="0 0 6 9"><path d="M0 0 L5 4.25 L0 8.5 Z" fill="#333"/></svg>
<div class="t" style="left:54.60px;top:133.99px;font-size:12.3px;letter-spacing:0.658px;color:#000;font-weight:normal;transform:scaleX(1.080);transform-origin:0 0;">Документи</div>
<div class="t" style="left:230.40px;top:133.99px;font-size:12.3px;letter-spacing:-0.098px;color:#000;font-weight:normal;transform:scaleX(1.080);transform-origin:0 0;">Бібліо...</div>
<svg style="left:38px;top:149.3px;" width="6" height="9" viewBox="0 0 6 9"><path d="M0 0 L5 4.25 L0 8.5 Z" fill="#333"/></svg>
<div class="t" style="left:54.60px;top:147.79px;font-size:12.3px;letter-spacing:0.231px;color:#000;font-weight:normal;transform:scaleX(1.080);transform-origin:0 0;">Елементи мнемосхеми</div>
<div class="t" style="left:230.40px;top:147.79px;font-size:12.3px;letter-spacing:-0.098px;color:#000;font-weight:normal;transform:scaleX(1.080);transform-origin:0 0;">Бібліо...</div>
<svg style="left:38px;top:164.6px;" width="6" height="9" viewBox="0 0 6 9"><path d="M0 0 L5 4.25 L0 8.5 Z" fill="#333"/></svg>
<div class="t" style="left:76.00px;top:163.09px;font-size:12.3px;letter-spacing:0.611px;color:#000;font-weight:normal;transform:scaleX(1.080);transform-origin:0 0;">Базові віджети</div>
<div class="t" style="left:230.40px;top:163.09px;font-size:12.3px;letter-spacing:-0.098px;color:#000;font-weight:normal;transform:scaleX(1.080);transform-origin:0 0;">Бібліо...</div>
<svg style="left:38px;top:180px;" width="6" height="9" viewBox="0 0 6 9"><path d="M0 0 L5 4.25 L0 8.5 Z" fill="#333"/></svg>
<div class="t" style="left:76.00px;top:178.49px;font-size:12.3px;letter-spacing:0.860px;color:#000;font-weight:normal;transform:scaleX(1.080);transform-origin:0 0;">Тести</div>
<div class="t" style="left:230.40px;top:178.49px;font-size:12.3px;letter-spacing:-0.098px;color:#000;font-weight:normal;transform:scaleX(1.080);transform-origin:0 0;">Бібліо...</div>
<svg style="left:37px;top:197.7px;" width="9" height="6" viewBox="0 0 9 6"><path d="M0 0 L9 0 L4.5 5.5 Z" fill="#333"/></svg>
<div class="t" style="left:54.00px;top:193.69px;font-size:12.3px;letter-spacing:-0.300px;color:#000;font-weight:normal;transform:scaleX(1.062);transform-origin:0 0;">КМ 101</div>
<div class="t" style="left:230.40px;top:193.69px;font-size:12.3px;letter-spacing:-0.098px;color:#000;font-weight:normal;transform:scaleX(1.080);transform-origin:0 0;">Бібліо...</div>
<svg style="left:58px;top:209.8px;" width="6" height="9" viewBox="0 0 6 9"><path d="M0 0 L5 4.25 L0 8.5 Z" fill="#333"/></svg>
<div class="t" style="left:96.40px;top:208.29px;font-size:12.3px;letter-spacing:-0.300px;color:#000;font-weight:normal;transform:scaleX(1.077);transform-origin:0 0;">АТ 101</div>
<div class="t" style="left:230.40px;top:208.29px;font-size:12.3px;letter-spacing:0.876px;color:#000;font-weight:normal;transform:scaleX(1.080);transform-origin:0 0;">Віджет</div>
<div class="t" style="left:96.40px;top:222.79px;font-size:12.3px;letter-spacing:0.221px;color:#000;font-weight:normal;transform:scaleX(1.080);transform-origin:0 0;">Повітряний холо...</div>
<div class="t" style="left:230.40px;top:222.79px;font-size:12.3px;letter-spacing:0.876px;color:#000;font-weight:normal;transform:scaleX(1.080);transform-origin:0 0;">Віджет</div>
<svg style="left:58px;top:240.2px;" width="6" height="9" viewBox="0 0 6 9"><path d="M0 0 L5 4.25 L0 8.5 Z" fill="#1a2a3a"/></svg>
<div class="t" style="left:96.40px;top:238.69px;font-size:12.3px;letter-spacing:0.192px;color:#fff;font-weight:normal;transform:scaleX(1.080);transform-origin:0 0;">Холодильник</div>
<div class="t" style="left:230.40px;top:238.69px;font-size:12.3px;letter-spacing:0.876px;color:#fff;font-weight:normal;transform:scaleX(1.080);transform-origin:0 0;">Віджет</div>
<svg style="left:54px;top:161px;" width="16" height="16" viewBox="0 0 16 16"><rect x="1" y="1" width="14" height="14" fill="#b8d8e0" stroke="#333" stroke-dasharray="1.5 1"/>
<path d="M0 0l3 3M16 0l-3 3M0 16l3-3M16 16l-3-3" stroke="#1b1" stroke-width="1.4"/><path d="M8 8.5 l5.80 0.00" stroke="#e8b000" stroke-width="2" stroke-linecap="round"/><path d="M8 8.5 l4.10 4.10" stroke="#e8b000" stroke-width="2" stroke-linecap="round"/><path d="M8 8.5 l0.00 5.80" stroke="#e8b000" stroke-width="2" stroke-linecap="round"/><path d="M8 8.5 l-4.10 4.10" stroke="#e8b000" stroke-width="2" stroke-linecap="round"/><path d="M8 8.5 l-5.80 0.00" stroke="#e8b000" stroke-width="2" stroke-linecap="round"/><path d="M8 8.5 l-4.10 -4.10" stroke="#e8b000" stroke-width="2" stroke-linecap="round"/><path d="M8 8.5 l-0.00 -5.80" stroke="#e8b000" stroke-width="2" stroke-linecap="round"/><path d="M8 8.5 l4.10 -4.10" stroke="#e8b000" stroke-width="2" stroke-linecap="round"/><circle cx="8" cy="8.5" r="2" fill="#fff49a"/></svg>
<svg style="left:54px;top:177px;" width="16" height="16" viewBox="0 0 16 16"><defs><radialGradient id="qg" cx="0.4" cy="0.3" r="0.8"><stop offset="0" stop-color="#c8e0ff"/><stop offset="0.6" stop-color="#3f86e8"/><stop offset="1" stop-color="#2a5cc0"/></radialGradient></defs>
<circle cx="8" cy="7.5" r="7" fill="url(#qg)" stroke="#2c5fb0" stroke-width="0.6"/>
<text x="4.6" y="12" font-size="11" font-weight="bold" fill="#fff" font-family="Liberation Sans">?</text></svg>
<svg style="left:75px;top:209px;" width="16" height="10" viewBox="0 0 16 10"><rect x="0" y="0" width="15" height="10" fill="#353535"/><rect x="3" y="1.2" width="9" height="3.6" fill="#fff"/></svg>
<svg style="left:75px;top:222px;" width="14" height="13" viewBox="0 0 14 13"><path d="M7 0 L13 5.5 L7 11 L1 5.5 Z" fill="#ddd" stroke="#bbb" stroke-width="0.8"/><path d="M7 0v11M1 5.5h12" stroke="#aaa" stroke-width="0.7"/><path d="M3 12.5h8" stroke="#ccc" stroke-width="1.2"/></svg>
<svg style="left:74px;top:237px;" width="16" height="14" viewBox="0 0 16 14"><rect x="0.5" y="0.5" width="15" height="13" fill="#c8d0d4" stroke="#7a8a90" stroke-width="0.8"/><path d="M4.5 2.5 L7.5 8 L1.5 8 Z" fill="#3a9a50"/><text x="9" y="8.5" font-size="7" font-weight="bold" font-style="italic" fill="#333" font-family="Liberation Sans">T</text><rect x="1" y="9.5" width="14" height="3.5" fill="#e8eef0"/></svg>
<div class="a" style="left:139px;top:293px;width:1px;height:1px;background:#b4aea6"></div>
<div class="a" style="left:142px;top:293px;width:1px;height:1px;background:#b4aea6"></div>
<div class="a" style="left:145px;top:293px;width:1px;height:1px;background:#b4aea6"></div>
<div class="a" style="left:148px;top:293px;width:1px;height:1px;background:#b4aea6"></div>
<div class="a" style="left:151px;top:293px;width:1px;height:1px;background:#b4aea6"></div>
<div class="a" style="left:154px;top:293px;width:1px;height:1px;background:#b4aea6"></div>
<div class="a" style="left:30px;top:316px;width:256px;height:274px;background:#fff;border:1px solid #aaa49c"></div>
<div class="a" style="left:31px;top:317px;width:240px;height:17px;background:linear-gradient(#fbfaf9,#ebe8e4)"></div>
<div class="a" style="left:31px;top:334px;width:240px;height:1px;background:#b8b2aa"></div>
<div class="a" style="left:130px;top:319px;width:1px;height:15px;background:#cfcac4"></div>
<div class="a" style="left:131px;top:319px;width:1px;height:15px;background:#fbfaf8"></div>
<div class="t" style="left:33.20px;top:320.49px;font-size:12.3px;letter-spacing:0.777px;color:#000;font-weight:normal;transform:scaleX(1.080);transform-origin:0 0;">Атрибут</div>
<div class="t" style="left:133.40px;top:320.49px;font-size:12.3px;letter-spacing:0.259px;color:#000;font-weight:normal;transform:scaleX(1.080);transform-origin:0 0;">Значення</div>
<div class="a" style="left:31px;top:335px;width:240px;height:50px;background:#f5f4f2"></div>
<div class="a" style="left:31px;top:385px;width:240px;height:14px;background:#fff"></div>
<div class="a" style="left:31px;top:399px;width:240px;height:14px;background:#f5f4f2"></div>
<div class="a" style="left:31px;top:413px;width:240px;height:24px;background:#fff"></div>
<div class="a" style="left:31px;top:437px;width:240px;height:15px;background:#f5f4f2"></div>
<div class="a" style="left:31px;top:452px;width:240px;height:15px;background:#fff"></div>
<div class="a" style="left:31px;top:467px;width:240px;height:14px;background:#f5f4f2"></div>
<div class="a" style="left:31px;top:481px;width:240px;height:14px;background:#fff"></div>
<div class="a" style="left:31px;top:495px;width:240px;height:14px;background:#f5f4f2"></div>
<div class="a" style="left:31px;top:509px;width:240px;height:50px;background:#308acb"></div>
<div class="a" style="left:31px;top:559px;width:240px;height:14px;background:#f5f4f2"></div>
<div class="a" style="left:31px;top:573px;width:240px;height:16px;background:#fff"></div>
<div class="a" style="left:131px;top:509px;width:1px;height:50px;background:#2a78b2"></div>
<div class="t" style="left:54.20px;top:496.29px;font-size:12.3px;letter-spacing:0.000px;color:#000;font-weight:normal;transform:scaleX(1.080);transform-origin:0 0;">У</div>
<div class="t" style="left:65.30px;top:496.29px;font-size:12.3px;letter-spacing:-0.733px;color:#000;font-weight:normal;">HTML</div>
<div class="t" style="left:54.20px;top:354.09px;font-size:12.3px;letter-spacing:0.025px;color:#000;font-weight:normal;transform:scaleX(1.080);transform-origin:0 0;">Обробка ...</div>
<svg style="left:38px;top:387.6px;" width="6" height="9" viewBox="0 0 6 9"><path d="M0 0 L5 4.25 L0 8.5 Z" fill="#333"/></svg>
<div class="t" style="left:54.20px;top:386.09px;font-size:12.3px;letter-spacing:-0.300px;color:#000;font-weight:normal;transform:scaleX(1.044);transform-origin:0 0;">Тло</div>
<svg style="left:38px;top:401.5px;" width="6" height="9" viewBox="0 0 6 9"><path d="M0 0 L5 4.25 L0 8.5 Z" fill="#333"/></svg>
<div class="t" style="left:54.20px;top:399.99px;font-size:12.3px;letter-spacing:0.623px;color:#000;font-weight:normal;transform:scaleX(1.080);transform-origin:0 0;">Границя</div>
<div class="t" style="left:54.20px;top:419.09px;font-size:12.3px;letter-spacing:0.963px;color:#0000ff;font-weight:normal;transform:scaleX(1.080);transform-origin:0 0;">Шрифт</div>
<div class="t" style="left:54.20px;top:438.99px;font-size:12.3px;letter-spacing:0.245px;color:#000;font-weight:normal;transform:scaleX(1.080);transform-origin:0 0;">Колір</div>
<div class="t" style="left:54.20px;top:454.09px;font-size:12.3px;letter-spacing:0.468px;color:#000;font-weight:normal;transform:scaleX(1.080);transform-origin:0 0;">Кут обер...</div>
<div class="t" style="left:54.20px;top:468.39px;font-size:12.3px;letter-spacing:0.252px;color:#000;font-weight:normal;transform:scaleX(1.080);transform-origin:0 0;">Перенес...</div>
<div class="t" style="left:54.20px;top:482.19px;font-size:12.3px;letter-spacing:0.035px;color:#0000ff;font-weight:normal;transform:scaleX(1.080);transform-origin:0 0;">Вирівнюв...</div>
<div class="t" style="left:54.20px;top:528.39px;font-size:12.3px;letter-spacing:0.722px;color:#fff;font-weight:normal;transform:scaleX(1.080);transform-origin:0 0;">Текст</div>
<div class="t" style="left:54.20px;top:560.29px;font-size:12.3px;letter-spacing:0.404px;color:#000;font-weight:normal;transform:scaleX(1.080);transform-origin:0 0;">Кількість...</div>
<div class="t" style="left:135.60px;top:386.79px;font-size:12.3px;letter-spacing:-0.230px;color:#000;font-weight:normal;transform:scaleX(1.080);transform-origin:0 0;">[, ]</div>
<div class="t" style="left:135.60px;top:400.39px;font-size:12.3px;letter-spacing:0.226px;color:#000;font-weight:normal;transform:scaleX(1.080);transform-origin:0 0;">[0, #000000, Суціл...</div>
<div class="t" style="left:163.90px;top:419.29px;font-size:12.3px;letter-spacing:-0.037px;color:#000;font-weight:normal;transform:scaleX(1.080);transform-origin:0 0;">Arial 14 1</div>
<div class="t" style="left:156.90px;top:439.19px;font-size:12.3px;letter-spacing:0.720px;color:#000;font-weight:normal;transform:scaleX(1.080);transform-origin:0 0;">#000000</div>
<div class="t" style="left:134.40px;top:453.79px;font-size:12.3px;letter-spacing:0.000px;color:#000;font-weight:normal;transform:scaleX(1.080);transform-origin:0 0;">0</div>
<div class="t" style="left:134.60px;top:468.09px;font-size:12.3px;letter-spacing:0.557px;color:#000;font-weight:normal;transform:scaleX(1.080);transform-origin:0 0;">true</div>
<div class="t" style="left:134.40px;top:482.29px;font-size:12.3px;letter-spacing:0.528px;color:#000;font-weight:normal;transform:scaleX(1.080);transform-origin:0 0;">У центрі</div>
<div class="t" style="left:134.40px;top:496.19px;font-size:12.3px;letter-spacing:0.236px;color:#000;font-weight:normal;transform:scaleX(1.080);transform-origin:0 0;">false</div>
<div class="t" style="left:134.60px;top:528.39px;font-size:12.3px;letter-spacing:-0.124px;color:#eef4fa;font-weight:normal;transform:scaleX(1.080);transform-origin:0 0;">об./хвил.</div>
<div class="t" style="left:134.60px;top:560.29px;font-size:12.3px;letter-spacing:0.000px;color:#000;font-weight:normal;transform:scaleX(1.080);transform-origin:0 0;">0</div>
<div class="a" style="left:134px;top:413px;width:24px;height:24px;background:#fff;border:1px solid #000"></div>
<div class="t" style="left:137.70px;top:417.95px;font-size:14px;letter-spacing:-1.800px;color:#000;font-weight:bold;">Aa</div>
<div class="a" style="left:134px;top:437px;width:16px;height:16px;background:#000"></div>
<div class="a" style="left:271px;top:317px;width:14px;height:272px;background:#e3e1de;border-left:1px solid #bcb8b2"></div>
<div class="a" style="left:272px;top:317px;width:13px;height:14px;background:linear-gradient(90deg,#fdfcfb,#f0eeeb);border-bottom:1px solid #bcb8b2"></div>
<svg style="left:274px;top:321px;" width="9" height="5" viewBox="0 0 9 5"><path d="M0 5 L4.5 0 L9 5 Z" fill="#444"/></svg>
<div class="a" style="left:272px;top:491px;width:13px;height:85px;background:linear-gradient(90deg,#fdfcfb,#f1efec);border-top:1px solid #b5b0a9;border-bottom:1px solid #b5b0a9"></div>
<div class="a" style="left:272px;top:576px;width:13px;height:13px;background:linear-gradient(90deg,#fdfcfb,#f0eeeb)"></div>
<svg style="left:274px;top:580px;" width="9" height="5" viewBox="0 0 9 5"><path d="M0 0 L9 0 L4.5 5 Z" fill="#444"/></svg>
<div class="a" style="left:289px;top:329px;width:1px;height:1px;background:#a9a39b"></div>
<div class="a" style="left:289px;top:332px;width:1px;height:1px;background:#a9a39b"></div>
<div class="a" style="left:289px;top:335px;width:1px;height:1px;background:#a9a39b"></div>
<div class="a" style="left:289px;top:338px;width:1px;height:1px;background:#a9a39b"></div>
<div class="a" style="left:289px;top:341px;width:1px;height:1px;background:#a9a39b"></div>
<div class="a" style="left:289px;top:344px;width:1px;height:1px;background:#a9a39b"></div>
<div class="a" style="left:292px;top:81px;width:573px;height:509px;background:#9cb1c3"></div>
<div class="a" style="left:292px;top:81px;width:366px;height:262px;background:#efebe7;border:1px solid #4f4f4f;border-right-color:#7a7570;border-bottom-color:#6a6560;border-radius:5px 5px 0 0"></div>
<div class="a" style="left:293px;top:104px;width:364px;height:238px;background:linear-gradient(90deg,#f9f7f4,#f1eee9)"></div>
<div class="a" style="left:292px;top:81px;width:366px;height:24px;background:linear-gradient(#3d9ae0,#3189d2 55%,#2a7fc8);border:1px solid #1f5e9c;border-bottom:1px solid #123e6a;border-radius:5px 5px 0 0"></div>
<svg style="left:297px;top:84px;" width="18" height="18" viewBox="0 0 18 18"><rect x="0.5" y="0.5" width="17" height="17" fill="#d6d6d6" stroke="#9a9a9a"/>
<rect x="1" y="1" width="16" height="2.5" fill="#5a90b8"/>
<path d="M5.5 4.5 L9 11.5 L2 11.5 Z" fill="#4fb060"/>
<text x="10" y="11.5" font-size="8.5" font-weight="bold" font-style="italic" fill="#111" font-family="Liberation Sans">T</text>
<rect x="1" y="12.5" width="16" height="4.5" fill="#e8e8e8"/>
<text x="1.5" y="16.8" font-size="4.8" fill="#333" font-family="Liberation Sans">Values</text></svg>
<div class="t" style="left:349.00px;top:86.20px;font-size:13px;letter-spacing:0.411px;color:#fff;font-weight:normal;transform:scaleX(1.080);transform-origin:0 0;text-shadow:1px 1px 0 rgba(10,40,80,0.6)">Віджет:</div>
<div class="t" style="left:404.20px;top:86.20px;font-size:13px;letter-spacing:-0.300px;color:#fff;font-weight:normal;transform:scaleX(1.062);transform-origin:0 0;text-shadow:1px 1px 0 rgba(10,40,80,0.6)">/wlb_CM101/wdg_elCooler</div>
<div class="a" style="left:594px;top:84px;width:18px;height:18px;border-radius:3px;background:linear-gradient(#3a94dc,#2a7cc4);border:1px solid #184e86"></div>
<div class="a" style="left:614px;top:84px;width:18px;height:18px;border-radius:3px;background:linear-gradient(#3a94dc,#2a7cc4);border:1px solid #184e86"></div>
<div class="a" style="left:634px;top:84px;width:18px;height:18px;border-radius:3px;background:linear-gradient(#3a94dc,#2a7cc4);border:1px solid #184e86"></div>
<div class="a" style="left:599px;top:95px;width:8px;height:2.5px;background:#fff"></div>
<div class="a" style="left:619px;top:89px;width:8px;height:8px;border:2px solid #fff"></div>
<svg style="left:638px;top:88px;" width="10" height="10" viewBox="0 0 10 10"><path d="M1.5 1.5 L8.5 8.5 M8.5 1.5 L1.5 8.5" stroke="#fff" stroke-width="2.2"/></svg>
<div class="a" style="left:296px;top:105px;width:358px;height:234px;border:1px solid #5e5e5e;border-right-color:#5e5e5e;background:#ede9e5"></div>
<svg style="left:297px;top:106px;shape-rendering:crispEdges" width="356" height="232" viewBox="0 0 356 232"><defs><pattern id="grd" x="2" y="1" width="4" height="4" patternUnits="userSpaceOnUse"><rect x="0" y="0" width="1" height="1" fill="#6f6f6f"/></pattern></defs><rect x="0" y="0" width="356" height="232" fill="url(#grd)"/></svg>
<div class="a" style="left:350px;top:122px;width:250px;height:200px;background:#fff"></div>
<svg style="left:0px;top:0px;" width="869" height="653" viewBox="0 0 869 653">
<path d="M475.5 142.5 L555.5 202.5 L475.5 262 L395.5 202.5 Z" fill="#d3d3d3" stroke="#000" stroke-width="1"/>
<path d="M475.5 142.5 V262 M395.5 202.5 H555.5" stroke="#000" stroke-width="1"/>
<path transform="translate(475.5 202.5) rotate(0)" d="M-3.85 -9 L-9.7 -26 A10.1 10.1 0 1 1 9.7 -26 L3.85 -9 Z" fill="rgba(255,255,0,0.8)" stroke="#138893" stroke-width="1"/><path transform="translate(475.5 202.5) rotate(90)" d="M-3.85 -9 L-9.7 -26 A10.1 10.1 0 1 1 9.7 -26 L3.85 -9 Z" fill="rgba(255,255,0,0.8)" stroke="#138893" stroke-width="1"/><path transform="translate(475.5 202.5) rotate(180)" d="M-3.85 -9 L-9.7 -26 A10.1 10.1 0 1 1 9.7 -26 L3.85 -9 Z" fill="rgba(255,255,0,0.8)" stroke="#138893" stroke-width="1"/><path transform="translate(475.5 202.5) rotate(270)" d="M-3.85 -9 L-9.7 -26 A10.1 10.1 0 1 1 9.7 -26 L3.85 -9 Z" fill="rgba(255,255,0,0.8)" stroke="#138893" stroke-width="1"/>
<circle cx="475.5" cy="202.5" r="9.3" fill="rgba(255,0,0,0.8)" stroke="#138893" stroke-width="1"/>
<path d="M475.5 262 L525.5 287.5 L425.5 287.5 Z" fill="#d3d3d3" stroke="#000" stroke-width="1"/>
</svg>
<div class="t" style="left:368.70px;top:144.65px;font-size:14px;letter-spacing:0.020px;color:#000;font-weight:bold;">300.25</div>
<div class="t" style="left:367.70px;top:160.65px;font-size:14px;letter-spacing:-0.160px;color:#000;font-weight:bold;">град.С</div>
<div class="t" style="left:538.70px;top:144.65px;font-size:14px;letter-spacing:0.020px;color:#000;font-weight:bold;">300.25</div>
<div class="t" style="left:537.60px;top:160.65px;font-size:14px;letter-spacing:-0.040px;color:#000;font-weight:bold;">град.С</div>
<div class="a" style="left:410px;top:289px;width:60px;height:23px;border:1px solid #b8b2aa;border-radius:3px;background:linear-gradient(#fdfdfc,#ebe9e6)"></div>
<div class="t" style="left:415.70px;top:292.55px;font-size:14px;letter-spacing:-0.550px;color:#000;font-weight:bold;">200</div>
<svg style="left:455px;top:298px;" width="9" height="5" viewBox="0 0 9 5"><path d="M0 0 L8.5 0 L4.25 4.5 Z" fill="#6a6a6a"/></svg>
<div class="t" style="left:483.20px;top:292.95px;font-size:14px;letter-spacing:0.050px;color:#000;font-weight:bold;">об./хвил.</div>
<div class="a" style="left:472px;top:287px;width:6px;height:6px;background:#90e890;border:1px solid #000"></div>
<div class="a" style="left:472px;top:297px;width:6px;height:6px;background:#90e890;border:1px solid #000"></div>
<div class="a" style="left:472px;top:307px;width:6px;height:6px;background:#90e890;border:1px solid #000"></div>
<div class="a" style="left:512px;top:287px;width:6px;height:6px;background:#90e890;border:1px solid #000"></div>
<div class="a" style="left:512px;top:307px;width:6px;height:6px;background:#90e890;border:1px solid #000"></div>
<div class="a" style="left:552px;top:287px;width:6px;height:6px;background:#90e890;border:1px solid #000"></div>
<div class="a" style="left:552px;top:297px;width:6px;height:6px;background:#90e890;border:1px solid #000"></div>
<div class="a" style="left:552px;top:307px;width:6px;height:6px;background:#90e890;border:1px solid #000"></div>
<div class="a" style="left:4px;top:590px;width:861px;height:36px;background:linear-gradient(#f5f3f0,#ece9e5)"></div>
<div class="a" style="left:4px;top:590px;width:861px;height:1px;background:#faf8f6"></div>
<div class="a" style="left:4px;top:626px;width:861px;height:1px;background:#c3bdb5"></div>
<div class="a" style="left:4px;top:627px;width:861px;height:22px;background:#efebe7"></div>
<svg style="left:9px;top:600px;" width="4" height="17" viewBox="0 0 4 17"><rect x="0" y="0" width="1" height="1" fill="#b4aea6"/><rect x="3" y="0" width="1" height="1" fill="#b4aea6"/><rect x="0" y="3" width="1" height="1" fill="#b4aea6"/><rect x="3" y="3" width="1" height="1" fill="#b4aea6"/><rect x="0" y="6" width="1" height="1" fill="#b4aea6"/><rect x="3" y="6" width="1" height="1" fill="#b4aea6"/><rect x="0" y="9" width="1" height="1" fill="#b4aea6"/><rect x="3" y="9" width="1" height="1" fill="#b4aea6"/><rect x="0" y="12" width="1" height="1" fill="#b4aea6"/><rect x="3" y="12" width="1" height="1" fill="#b4aea6"/><rect x="0" y="15" width="1" height="1" fill="#b4aea6"/><rect x="3" y="15" width="1" height="1" fill="#b4aea6"/></svg>
<div class="a" style="left:144px;top:598px;width:1px;height:20px;background:#d3cec8"></div>
<div class="a" style="left:145px;top:598px;width:1px;height:20px;background:#fbfaf8"></div>
<svg style="left:0;top:0;width:0;height:0"><defs><radialGradient id="bl" cx="0.35" cy="0.3" r="0.9"><stop offset="0" stop-color="#b4b8ff"/><stop offset="1" stop-color="#4848f4"/></radialGradient><radialGradient id="gr" cx="0.3" cy="0.25" r="0.9"><stop offset="0" stop-color="#e6e6e6"/><stop offset="1" stop-color="#a8a8a8"/></radialGradient><radialGradient id="yl" cx="0.35" cy="0.3" r="0.9"><stop offset="0" stop-color="#fff6c0"/><stop offset="1" stop-color="#f6cc30"/></radialGradient></defs></svg>
<svg style="left:0;top:0" width="869" height="653"><rect x="22.5" y="598.5" width="15" height="15" fill="url(#gr)" stroke="#a0a0a0" stroke-width="1"/><rect x="26.5" y="601.5" width="15" height="16" fill="url(#bl)" stroke="#5a5ae8" stroke-width="1"/><rect x="57.5" y="601.5" width="15" height="16" fill="url(#bl)" stroke="#5a5ae8" stroke-width="1"/><rect x="53.5" y="598.5" width="15" height="15" fill="url(#gr)" stroke="#a0a0a0" stroke-width="1"/><rect x="83.5" y="597.5" width="10" height="10" fill="url(#gr)" stroke="#a0a0a0" stroke-width="1"/><rect x="94.5" y="608.5" width="10" height="10" fill="url(#gr)" stroke="#a0a0a0" stroke-width="1"/><rect x="89.5" y="603.5" width="9" height="10" fill="url(#bl)" stroke="#5a5ae8" stroke-width="1"/><rect x="121.5" y="603.5" width="8" height="10" fill="url(#bl)" stroke="#5a5ae8" stroke-width="1"/><rect x="114.5" y="597.5" width="10" height="10" fill="url(#gr)" stroke="#a0a0a0" stroke-width="1"/><rect x="125.5" y="608.5" width="10" height="10" fill="url(#gr)" stroke="#a0a0a0" stroke-width="1"/><rect x="152.5" y="597" width="2" height="21" fill="#111"/><rect x="156.5" y="599.5" width="14" height="7" fill="url(#yl)" stroke="#e2b43a" stroke-width="1"/><rect x="156.5" y="608.5" width="16" height="9" fill="url(#bl)" stroke="#5a5ae8" stroke-width="1"/><rect x="187.5" y="599.5" width="13" height="7" fill="url(#yl)" stroke="#e2b43a" stroke-width="1"/><rect x="185.5" y="607.5" width="17" height="10" fill="url(#bl)" stroke="#5a5ae8" stroke-width="1"/><path d="M194 597v2M194 606v2M194 616v2" stroke="#111" stroke-width="1.6"/><rect x="233.5" y="597" width="2" height="21" fill="#111"/><rect x="218.5" y="599.5" width="14" height="7" fill="url(#yl)" stroke="#e2b43a" stroke-width="1"/><rect x="215.5" y="608.5" width="17" height="9" fill="url(#bl)" stroke="#5a5ae8" stroke-width="1"/><rect x="245" y="598" width="21" height="2" fill="#111"/><rect x="247.5" y="600.5" width="8" height="15" fill="url(#yl)" stroke="#e2b43a" stroke-width="1"/><rect x="257.5" y="600.5" width="7" height="17" fill="url(#bl)" stroke="#5a5ae8" stroke-width="1"/><rect x="277.5" y="601.5" width="8" height="14" fill="url(#yl)" stroke="#e2b43a" stroke-width="1"/><rect x="288.5" y="600.5" width="7" height="16" fill="url(#bl)" stroke="#5a5ae8" stroke-width="1"/><path d="M276 608.5h2M286 608.5h2M296 608.5h2" stroke="#111" stroke-width="1.6"/><rect x="309.5" y="601.5" width="8" height="14" fill="url(#yl)" stroke="#e2b43a" stroke-width="1"/><rect x="319.5" y="598.5" width="7" height="17" fill="url(#bl)" stroke="#5a5ae8" stroke-width="1"/><rect x="308" y="617" width="21" height="2" fill="#111"/></svg>
<div class="t" style="left:656.40px;top:632.69px;font-size:12.3px;letter-spacing:-0.130px;color:#000;font-weight:normal;transform:scaleX(1.080);transform-origin:0 0;">100%</div>
<div class="t" style="left:698.00px;top:632.69px;font-size:12.3px;letter-spacing:0.000px;color:#000;font-weight:normal;transform:scaleX(1.080);transform-origin:0 0;">*</div>
<div class="t" style="left:710.00px;top:632.69px;font-size:12.3px;letter-spacing:0.188px;color:#000;font-weight:normal;transform:scaleX(1.080);transform-origin:0 0;">Зміна розміру</div>
<div class="t" style="left:805.20px;top:632.69px;font-size:12.3px;letter-spacing:0.000px;color:#000;font-weight:normal;transform:scaleX(1.080);transform-origin:0 0;">.</div>
<div class="t" style="left:815.50px;top:632.69px;font-size:12.3px;letter-spacing:0.649px;color:#e60000;font-weight:normal;transform:scaleX(1.080);transform-origin:0 0;">root</div>
<div class="a" style="left:860px;top:638px;width:1px;height:1px;background:#b8b2aa"></div>
<div class="a" style="left:857px;top:641px;width:1px;height:1px;background:#b8b2aa"></div>
<div class="a" style="left:860px;top:641px;width:1px;height:1px;background:#b8b2aa"></div>
<div class="a" style="left:854px;top:644px;width:1px;height:1px;background:#b8b2aa"></div>
<div class="a" style="left:857px;top:644px;width:1px;height:1px;background:#b8b2aa"></div>
<div class="a" style="left:860px;top:644px;width:1px;height:1px;background:#b8b2aa"></div>
<div class="a" style="left:851px;top:647px;width:1px;height:1px;background:#b8b2aa"></div>
<div class="a" style="left:854px;top:647px;width:1px;height:1px;background:#b8b2aa"></div>
<div class="a" style="left:857px;top:647px;width:1px;height:1px;background:#b8b2aa"></div>
<div class="a" style="left:860px;top:647px;width:1px;height:1px;background:#b8b2aa"></div>
</body></html>
